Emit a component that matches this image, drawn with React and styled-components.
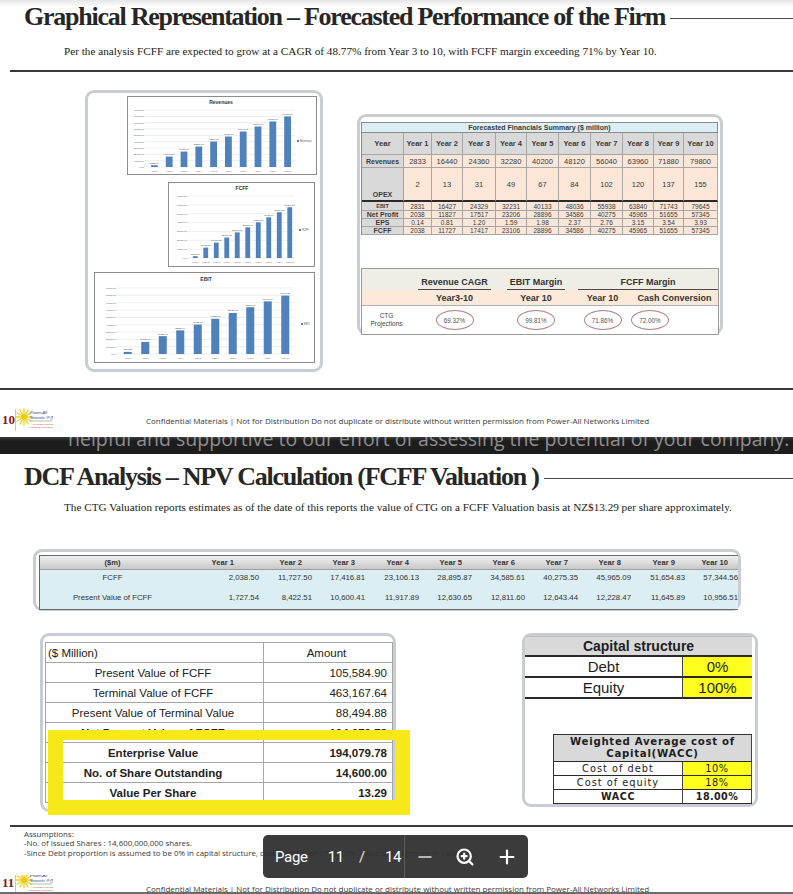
import React from 'react'
import styled, { createGlobalStyle } from 'styled-components'
import { Minus, Plus, ZoomIn } from 'lucide-react'

const sans = `"Liberation Sans", Arial, sans-serif`
const serif = `"Liberation Serif", "Times New Roman", serif`
const wide = `"DejaVu Sans", Verdana, sans-serif`

const GlobalStyle = createGlobalStyle`
  html, body { margin: 0; padding: 0; background: #ffffff; }
  body { font-family: ${sans}; color: #222; }
`

// ---------- data ----------
const revenues = [2833, 16440, 24360, 32280, 40200, 48120, 56040, 63960, 71880, 79800]
const fcff = [2038.5, 11727.5, 17416.81, 23106.13, 28895.87, 34585.61, 40275.35, 45965.09, 51654.83, 57344.56]
const ebit = [2831.21, 16427.06, 24328.91, 32230.74, 40133.21, 48035.37, 55937.96, 63840.6, 71742.81, 79645.23]
const pvFcff = ['1,727.54', '8,422.51', '10,600.41', '11,917.89', '12,630.65', '12,811.60', '12,643.44', '12,228.47', '11,645.89', '10,956.51']
const fcffText = ['2,038.50', '11,727.50', '17,416.81', '23,106.13', '28,895.87', '34,585.61', '40,275.35', '45,965.09', '51,654.83', '57,344.56']

const summaryRows = [
  { label: 'Revenues', h: 13, fs: 7.5, values: revenues },
  { label: 'OPEX', h: 34, fs: 7.5, end: true, thick: true, values: [2, 13, 31, 49, 67, 84, 102, 120, 137, 155] },
  { label: 'EBIT', h: 9, fs: 6.5, lfs: 5.5, values: [2831, 16427, 24329, 32231, 40133, 48036, 55938, 63840, 71743, 79645] },
  { label: 'Net Profit', h: 8, fs: 6.5, values: [2038, 11827, 17517, 23206, 28896, 34586, 40275, 45965, 51655, 57345] },
  { label: 'EPS', h: 8, fs: 6.5, values: ['0.14', '0.81', '1.20', '1.59', '1.98', '2.37', '2.76', '3.15', '3.54', '3.93'] },
  { label: 'FCFF', h: 8, fs: 6.5, values: [2038, 11727, 17417, 23106, 28896, 34586, 40275, 45965, 51655, 57345] },
]

const years = Array.from({ length: 10 }, (_, i) => `Year ${i + 1}`)

// ---------- page chrome ----------
const Viewer = styled.div`
  position: relative;
  width: 793px;
  height: 894px;
  overflow: hidden;
  background: #fff;
`

const Slide = styled.section`
  display: flex;
  flex-direction: column;
  padding-top: ${({ $top }) => $top}px;
  background: ${({ $shade }) => ($shade ? 'linear-gradient(#e6e6e6, #fff 7px)' : '#fff')};
`

const TitleRow = styled.div`
  display: flex;
  align-items: center;
  height: 26px;
  padding-left: 24px;
`

const Title = styled.h1`
  margin: 0;
  font-family: ${serif};
  font-weight: 700;
  font-size: 26px;
  line-height: 26px;
  letter-spacing: -1.25px;
  color: #262626;
  white-space: nowrap;
`

const TitleLine = styled.div`
  flex: 1;
  height: 1px;
  margin: 2px 0 0 5px;
  background: #4a4a4a;
`

const Lead = styled.p`
  margin: ${({ $mt }) => $mt}px 0 0 64px;
  font-family: ${serif};
  font-size: 11.2px;
  line-height: 14px;
  color: #222;
  white-space: nowrap;
`

const Rule = styled.div`
  height: 2px;
  margin: ${({ $mt }) => $mt}px 0 0 ${({ $ml = 10 }) => $ml}px;
  background: #3a3a3a;
`

const Row = styled.div`
  position: relative;
  display: flex;
  align-items: flex-start;
  margin-top: ${({ $mt }) => $mt}px;
`

const Frame = styled.div`
  box-sizing: border-box;
  flex: none;
  display: flex;
  flex-direction: column;
  align-items: flex-start;
  width: ${({ $w }) => $w}px;
  height: ${({ $h }) => $h}px;
  margin: ${({ $mt = 0 }) => $mt}px 0 0 ${({ $ml = 0 }) => $ml}px;
  border: 3px solid #c8cdd4;
  border-radius: 9px;
  background: #fff;
`

const ChartBox = styled.div`
  margin: ${({ $mt }) => $mt}px 0 0 ${({ $ml }) => $ml}px;
  line-height: 0;
`

// ---------- footer ----------
const Footer = styled.div`
  display: flex;
  align-items: center;
  height: ${({ $h }) => $h}px;
  margin-top: ${({ $mt }) => $mt}px;
  overflow: hidden;
`

const PageNum = styled.span`
  width: 13px;
  padding-left: 2px;
  font-family: ${serif};
  font-weight: 700;
  font-size: 13px;
  color: #7a1c2c;
`

const ConfText = styled.span`
  margin-left: 93px;
  margin-top: ${({ $mt = 0 }) => $mt}px;
  font-family: "Open Sans", ${sans};
  font-size: 8px;
  color: #3a3a3a;
  white-space: nowrap;
`

const Band = styled.div`
  height: 17px;
  margin-top: ${({ $mt }) => $mt}px;
  overflow: hidden;
  background: linear-gradient(#3c3c3c, #1d1d1d 4px);
`

const BandText = styled.div`
  margin: -8px 0 0 68px;
  font-family: "Open Sans", ${sans};
  font-size: 19.5px;
  line-height: 20px;
  color: #8f8f8f;
  white-space: nowrap;
`

const BottomEdge = styled.div`
  height: 3px;
  background: #6b6b6b;
`

const Logo = () => {
  const rays = Array.from({ length: 12 }, (_, i) => {
    const a = (i / 12) * Math.PI * 2
    return (
      <line
        key={i}
        x1={9 + Math.cos(a) * 2.5}
        y1={9 + Math.sin(a) * 2.5}
        x2={9 + Math.cos(a) * 8}
        y2={9 + Math.sin(a) * 8}
      />
    )
  })
  return (
    <svg width="38" height="24" viewBox="0 0 38 24" style={{ flex: 'none' }}>
      <line x1="0.5" y1="1" x2="0.5" y2="23" stroke="#caa4a8" strokeWidth="0.7" />
      <g stroke="#e9d21c" strokeWidth="1.3" strokeLinecap="round">{rays}</g>
      <circle cx="9" cy="9" r="2.6" fill="#f2c500" />
      <text x="15" y="6" fontSize="4" fontStyle="italic" fill="#2c3e8c" fontFamily={sans}>Power-All</text>
      <text x="15" y="11" fontSize="3.6" fontStyle="italic" fill="#2c3e8c" fontFamily={sans}>Networks 中国互联</text>
      <line x1="15" y1="13" x2="37" y2="13" stroke="#6aa84f" strokeWidth="0.6" />
      <text x="16" y="16.5" fontSize="2.2" fill="#c0392b" fontFamily={sans}>A Celebration of Dynamics</text>
      <text x="14" y="20" fontSize="2.2" fill="#c0392b" fontFamily={sans}>in Business, Media and Social</text>
    </svg>
  )
}

// ---------- charts ----------
const BarChart = ({ title, legend, data, max, w, h, plot }) => {
  const { left, right, top, base, tx, ty, lx, ly } = plot
  const slot = (right - left) / data.length
  const bw = slot * 0.46
  const y = (v) => base - (v / max) * (base - top)
  const ticks = []
  for (let v = 0; v <= max; v += 10000) ticks.push(v)
  return (
    <svg width={w} height={h} viewBox={`0 0 ${w} ${h}`} fontFamily={sans}>
      <rect x="0.5" y="0.5" width={w - 1} height={h - 1} fill="#fff" stroke="#8c8c8c" />
      <text x={tx} y={ty} fontSize="5" fontWeight="700" textAnchor="middle" fill="#333">{title}</text>
      {ticks.map((t) => (
        <g key={t}>
          <line x1={left - 2} x2={right} y1={y(t)} y2={y(t)} stroke="#d4d4d4" strokeWidth="0.4" />
          <text x={left - 3} y={y(t) + 0.9} fontSize="2.4" textAnchor="end" fill="#555">{t.toFixed(2)}</text>
        </g>
      ))}
      {data.map((v, i) => {
        const x = left + slot * i + (slot - bw) / 2
        return (
          <g key={i}>
            <rect x={x} y={y(v)} width={bw} height={base - y(v)} fill="#4f81bd" />
            <text x={x + bw / 2} y={y(v) - 1.6} fontSize="2.4" textAnchor="middle" fill="#444">{v.toFixed(2)}</text>
            <text x={x + bw / 2} y={base + 5} fontSize="2.4" textAnchor="middle" fill="#555">Year {i + 1}</text>
          </g>
        )
      })}
      <rect x={lx} y={ly - 2} width="2" height="2" fill="#4f81bd" />
      <text x={lx + 3} y={ly} fontSize="2.6" fill="#555">{legend}</text>
    </svg>
  )
}

// ---------- forecast summary table ----------
const SumGrid = styled.div`
  display: grid;
  grid-template-columns: 42px 28px 31px 33px 31px 32px 32px 32px 31px 30px 34px;
  margin: 5px 0 0 1px;
  border-left: 1px solid #8a8a8a;
  border-top: 1px solid #8a8a8a;
  font-family: ${sans};
  color: #3a3a3a;
`

const SumTitle = styled.div`
  grid-column: 1 / -1;
  height: 9px;
  line-height: 9px;
  text-align: center;
  font-size: 7px;
  font-weight: 700;
  background: #dbeef4;
  border-right: 1px solid #8a8a8a;
  border-bottom: 1px solid #8a8a8a;
`

const SumCell = styled.div`
  box-sizing: border-box;
  display: flex;
  justify-content: center;
  align-items: ${({ $end }) => ($end ? 'flex-end' : 'center')};
  height: ${({ $h }) => $h}px;
  padding-bottom: ${({ $end }) => ($end ? 2 : 0)}px;
  background: ${({ $bg }) => $bg};
  font-size: ${({ $fs }) => $fs}px;
  font-weight: ${({ $bold }) => ($bold ? 700 : 400)};
  white-space: nowrap;
  border-right: 1px solid #a6a6a6;
  border-bottom: ${({ $thick }) => ($thick ? '2px solid #2a2a2a' : '1px solid #a6a6a6')};
`

const MiniGrid = styled.div`
  display: grid;
  grid-template-columns: 49px 87px 76px 57px 87px;
  margin: 33px 0 0 1px;
  border: 1px solid #9a9a9a;
  font-family: ${sans};
  color: #333;
`

const MiniCell = styled.div`
  display: flex;
  justify-content: ${({ $start }) => ($start ? 'flex-start' : 'center')};
  align-items: ${({ $end }) => ($end ? 'flex-end' : 'center')};
  grid-column: span ${({ $span = 1 }) => $span};
  height: ${({ $h }) => $h}px;
  background: ${({ $bg }) => $bg};
  border-top: ${({ $line }) => ($line ? '1px solid #b0b0b0' : 'none')};
  font-size: 9px;
  font-weight: 700;
  white-space: nowrap;
`

const Underlined = styled.span`
  padding: 0 ${({ $pad = 3 }) => $pad}px 2px;
  margin-left: ${({ $ml = 0 }) => $ml}px;
  width: ${({ $w }) => ($w ? `${$w}px` : 'auto')};
  text-align: center;
  border-bottom: 1px solid #4a4a4a;
`

const Projection = styled.span`
  font-size: 6.5px;
  font-weight: 400;
  line-height: 8px;
  text-align: center;
  color: #444;
`

const Oval = styled.span`
  box-sizing: border-box;
  display: flex;
  align-items: center;
  justify-content: center;
  width: 38px;
  height: 20px;
  border: 1.5px solid #b58383;
  border-radius: 50%;
  font-size: 6.3px;
  font-weight: 400;
  color: #555;
`

// ---------- DCF table ----------
const DcfGrid = styled.div`
  display: grid;
  grid-template-columns: 145px 74px 53px 53px 54px 53px 53px 53px 53px 54px 53px;
  margin: 3px 0 0 3px;
  border: 1px solid #6a6a6a;
  border-right-width: 0;
  background: #dbeef4;
  font-family: ${sans};
  color: #333;
`

const DcfCell = styled.div`
  display: flex;
  align-items: center;
  justify-content: ${({ $align }) => $align};
  height: ${({ $h }) => $h}px;
  padding-right: ${({ $pr = 0 }) => $pr}px;
  background: ${({ $head }) => ($head ? 'linear-gradient(#efefef, #c8c8c8)' : 'transparent')};
  border-bottom: ${({ $head }) => ($head ? '1px solid #a0a0a0' : 'none')};
  font-size: ${({ $head }) => ($head ? 7.6 : 7.8)}px;
  font-weight: ${({ $head }) => ($head ? 700 : 400)};
  white-space: nowrap;
`

// ---------- NPV table ----------
const NpvGrid = styled.div`
  display: grid;
  grid-template-columns: 218px 129px;
  margin: 6px 0 0 2px;
  border-top: 1px solid #a6a6a6;
  border-left: 1px solid #a6a6a6;
  font-family: ${sans};
  color: #222;
`

const NpvCell = styled.div`
  box-sizing: border-box;
  display: flex;
  align-items: center;
  justify-content: ${({ $align }) => $align};
  height: 20px;
  padding: 0 5px 0 2px;
  border-right: 1px solid #a6a6a6;
  border-bottom: 1px solid #a6a6a6;
  font-size: 11.5px;
  font-weight: ${({ $bold }) => ($bold ? 700 : 400)};
  white-space: nowrap;
`

const Highlight = styled.div`
  position: absolute;
  left: 48px;
  top: 97px;
  box-sizing: border-box;
  width: 362px;
  height: 85px;
  border-style: solid;
  border-color: #f7e81a;
  border-width: 10px 15px 15px 15px;
  pointer-events: none;
`

// ---------- capital structure / WACC ----------
const CapGrid = styled.div`
  display: grid;
  grid-template-columns: ${({ $cols }) => $cols};
  margin: ${({ $mt = 0 }) => $mt}px 0 0 ${({ $ml = 0 }) => $ml}px;
  border-top: ${({ $box }) => ($box ? '1.5px solid #333' : '1px solid #bdbdbd')};
  border-left: ${({ $box }) => ($box ? '1.5px solid #333' : 'none')};
  color: #1e1e1e;
`

const CapCell = styled.div`
  box-sizing: border-box;
  display: flex;
  align-items: center;
  justify-content: center;
  grid-column: span ${({ $span = 1 }) => $span};
  height: ${({ $h }) => $h}px;
  background: ${({ $bg = '#fff' }) => $bg};
  border-bottom: ${({ $b = 2 }) => $b}px solid #2a2a2a;
  border-right: ${({ $br }) => ($br ? `${$br}px solid #444` : 'none')};
  font-family: ${({ $wide }) => ($wide ? wide : sans)};
  font-size: ${({ $fs }) => $fs}px;
  font-weight: ${({ $bold }) => ($bold ? 700 : 400)};
  letter-spacing: ${({ $ls = 0 }) => $ls}px;
  line-height: 1.15;
  text-align: center;
  white-space: nowrap;
`

// ---------- assumptions + pager ----------
const Notes = styled.div`
  margin: 3px 0 0 24px;
  font-family: "Open Sans", ${sans};
  font-size: 7.9px;
  line-height: 9.3px;
  color: #3a3a3a;
  white-space: nowrap;
`

const Pager = styled.div`
  position: absolute;
  left: 263px;
  top: 835px;
  display: flex;
  width: 265px;
  height: 43px;
  border-radius: 5px;
  background: rgba(48, 48, 48, 0.95);
  color: #fff;
  font-family: Roboto, ${sans};
`

const PagerCount = styled.div`
  display: flex;
  align-items: center;
  width: 141px;
  border-right: 1px solid #5e5e5e;
`

const PagerWord = styled.span`
  margin-left: ${({ $ml }) => $ml}px;
  font-size: 15px;
  letter-spacing: -0.3px;
  color: ${({ $dim }) => ($dim ? '#e6e6e6' : '#fff')};
`

const PagerTools = styled.div`
  flex: 1;
  display: flex;
  align-items: center;
  justify-content: space-around;
`

export default function App() {
  return (
    <Viewer>
      <GlobalStyle />

      <Slide $top={4} $shade>
        <TitleRow>
          <Title>Graphical Representation – Forecasted Performance of the Firm</Title>
          <TitleLine />
        </TitleRow>
        <Lead $mt={14}>
          Per the analysis FCFF are expected to grow at a CAGR of 48.77% from Year 3 to 10, with FCFF margin exceeding 71% by Year 10.
        </Lead>
        <Rule $mt={12} />

        <Row $mt={18}>
          <Frame $w={238} $h={282} $ml={85}>
            <ChartBox $ml={39} $mt={3}>
              <BarChart
                title="Revenues"
                legend="Revenues"
                data={revenues}
                max={90000}
                w={190}
                h={79}
                plot={{ left: 20, right: 168, top: 14, base: 71, tx: 94, ty: 7.5, lx: 170, ly: 46 }}
              />
            </ChartBox>
            <ChartBox $ml={80} $mt={7}>
              <BarChart
                title="FCFF"
                legend="FCFF"
                data={fcff}
                max={70000}
                w={147}
                h={85}
                plot={{ left: 22, right: 127, top: 14, base: 76, tx: 74, ty: 7.5, lx: 131, ly: 49 }}
              />
            </ChartBox>
            <ChartBox $ml={6} $mt={5}>
              <BarChart
                title="EBIT"
                legend="EBIT"
                data={ebit}
                max={90000}
                w={221}
                h={91}
                plot={{ left: 25, right: 200, top: 16, base: 82, tx: 112, ty: 8.5, lx: 207, ly: 53 }}
              />
            </ChartBox>
          </Frame>

          <Frame $w={366} $h={221} $ml={34} $mt={24}>
            <SumGrid>
              <SumTitle>Forecasted Financials Summary ($ million)</SumTitle>
              <SumCell $h={22} $bg="#d9d9d9" $fs={7.8} $bold>Year</SumCell>
              {years.map((y) => (
                <SumCell key={y} $h={22} $bg="#d9d9d9" $fs={7.5} $bold>{y}</SumCell>
              ))}
              {summaryRows.map((r) => (
                <React.Fragment key={r.label}>
                  <SumCell $h={r.h} $bg="#d9d9d9" $fs={r.lfs || 7} $bold $end={r.end} $thick={r.thick}>
                    {r.label}
                  </SumCell>
                  {r.values.map((v, i) => (
                    <SumCell key={i} $h={r.h} $bg="#fce6d8" $fs={r.fs} $thick={r.thick}>{v}</SumCell>
                  ))}
                </React.Fragment>
              ))}
            </SumGrid>

            <MiniGrid>
              <MiniCell $h={21} $bg="#eeeee6" />
              <MiniCell $h={21} $bg="#eeeee6" $end><Underlined>Revenue CAGR</Underlined></MiniCell>
              <MiniCell $h={21} $bg="#eeeee6" $end><Underlined>EBIT Margin</Underlined></MiniCell>
              <MiniCell $h={21} $bg="#eeeee6" $span={2} $end $start>
                <Underlined $ml={4} $w={136}>FCFF Margin</Underlined>
              </MiniCell>
              <MiniCell $h={15} $bg="#fde9d9" />
              <MiniCell $h={15} $bg="#fde9d9">Year3-10</MiniCell>
              <MiniCell $h={15} $bg="#fde9d9">Year 10</MiniCell>
              <MiniCell $h={15} $bg="#fde9d9">Year 10</MiniCell>
              <MiniCell $h={15} $bg="#fde9d9">Cash Conversion</MiniCell>
              <MiniCell $h={28} $bg="#fff" $line>
                <Projection>CTG<br />Projections</Projection>
              </MiniCell>
              <MiniCell $h={28} $bg="#fff" $line><Oval>69.32%</Oval></MiniCell>
              <MiniCell $h={28} $bg="#fff" $line><Oval>99.81%</Oval></MiniCell>
              <MiniCell $h={28} $bg="#fff" $line><Oval>71.86%</Oval></MiniCell>
              <MiniCell $h={28} $bg="#fff" $line $start><Oval>72.00%</Oval></MiniCell>
            </MiniGrid>
          </Frame>
        </Row>

        <Rule $mt={16} $ml={0} />

        <Footer $h={24} $mt={18}>
          <PageNum>10</PageNum>
          <Logo />
          <ConfText>
            Confidential Materials | Not for Distribution Do not duplicate or distribute without written permission from Power-All Networks Limited
          </ConfText>
        </Footer>
      </Slide>

      <Band $mt={5}>
        <BandText>helpful and supportive to our effort of assessing the potential of your company.</BandText>
      </Band>

      <Slide $top={10}>
        <TitleRow>
          <Title>DCF Analysis – NPV Calculation (FCFF Valuation )</Title>
          <TitleLine />
        </TitleRow>
        <Lead $mt={10}>
          The CTG Valuation reports estimates as of the date of this reports the value of CTG on a FCFF Valuation basis at NZ$13.29 per share approximately.
        </Lead>

        <Row $mt={35}>
          <Frame $w={708} $h={62} $ml={33}>
            <DcfGrid>
              <DcfCell $head $h={13} $align="center">($m)</DcfCell>
              {years.map((y, i) => (
                <DcfCell key={y} $head $h={13} $align="flex-end" $pr={i === 0 ? 25 : 10}>{y}</DcfCell>
              ))}
              <DcfCell $h={15} $align="center">FCFF</DcfCell>
              {fcffText.map((v) => (
                <DcfCell key={v} $h={15} $align="flex-end">{v}</DcfCell>
              ))}
              <DcfCell $h={24} $align="center">Present Value of FCFF</DcfCell>
              {pvFcff.map((v) => (
                <DcfCell key={v} $h={24} $align="flex-end">{v}</DcfCell>
              ))}
            </DcfGrid>
          </Frame>
        </Row>

        <Row $mt={22}>
          <Frame $w={356} $h={179} $ml={40}>
            <NpvGrid>
              <NpvCell $align="flex-start">($ Million)</NpvCell>
              <NpvCell $align="center">Amount</NpvCell>
              <NpvCell $align="center">Present Value of FCFF</NpvCell>
              <NpvCell $align="flex-end">105,584.90</NpvCell>
              <NpvCell $align="center">Terminal Value of FCFF</NpvCell>
              <NpvCell $align="flex-end">463,167.64</NpvCell>
              <NpvCell $align="center">Present Value of Terminal Value</NpvCell>
              <NpvCell $align="flex-end">88,494.88</NpvCell>
              <NpvCell $align="center" $bold>Net Present Value of FCFF</NpvCell>
              <NpvCell $align="flex-end" $bold>194,079.78</NpvCell>
              <NpvCell $align="center" $bold>Enterprise Value</NpvCell>
              <NpvCell $align="flex-end" $bold>194,079.78</NpvCell>
              <NpvCell $align="center" $bold>No. of Share Outstanding</NpvCell>
              <NpvCell $align="flex-end" $bold>14,600.00</NpvCell>
              <NpvCell $align="center" $bold>Value Per Share</NpvCell>
              <NpvCell $align="flex-end" $bold>13.29</NpvCell>
            </NpvGrid>
          </Frame>

          <Frame $w={236} $h={174} $ml={126}>
            <CapGrid $cols="158px 69px">
              <CapCell $span={2} $h={20} $bg="#d9d9d9" $fs={14} $bold>Capital structure</CapCell>
              <CapCell $h={21} $fs={15} $br={1}>Debt</CapCell>
              <CapCell $h={21} $fs={15} $bg="#ffff1e">0%</CapCell>
              <CapCell $h={21} $fs={15} $br={1}>Equity</CapCell>
              <CapCell $h={21} $fs={15} $bg="#ffff1e">100%</CapCell>
            </CapGrid>

            <CapGrid $cols="129px 69px" $mt={35} $ml={28} $box>
              <CapCell $span={2} $h={27} $bg="#d9d9d9" $fs={10.2} $ls={0.7} $bold $wide $b={1.5} $br={1.5}>
                Weighted Average cost of<br />Capital(WACC)
              </CapCell>
              <CapCell $h={14} $fs={9.8} $ls={1} $wide $b={1} $br={1}>Cost of debt</CapCell>
              <CapCell $h={14} $fs={9.8} $ls={0.6} $wide $b={1} $br={1.5} $bg="#ffff1e">10%</CapCell>
              <CapCell $h={14} $fs={9.8} $ls={1} $wide $b={1} $br={1}>Cost of equity</CapCell>
              <CapCell $h={14} $fs={9.8} $ls={0.6} $wide $b={1} $br={1.5} $bg="#ffff1e">18%</CapCell>
              <CapCell $h={14} $fs={9.6} $ls={0.6} $wide $bold $b={1.5} $br={1}>WACC</CapCell>
              <CapCell $h={14} $fs={9.6} $ls={0.4} $wide $bold $b={1.5} $br={1.5}>18.00%</CapCell>
            </CapGrid>
          </Frame>

          <Highlight />
        </Row>

        <Rule $mt={13} />

        <Notes>
          Assumptions:
          <br />
          -No. of issued Shares : 14,600,000,000 shares.
          <br />
          -Since Debt proportion is assumed to be 0% in capital structure, cost of Debt, which is 10% , have been ignored in valuation.
        </Notes>

        <Footer $h={17} $mt={17}>
          <PageNum>11</PageNum>
          <Logo />
          <ConfText $mt={10}>
            Confidential Materials | Not for Distribution Do not duplicate or distribute without written permission from Power-All Networks Limited
          </ConfText>
        </Footer>
        <BottomEdge />
      </Slide>

      <Pager>
        <PagerCount>
          <PagerWord $ml={12}>Page</PagerWord>
          <PagerWord $ml={20}>11</PagerWord>
          <PagerWord $ml={15} $dim>/</PagerWord>
          <PagerWord $ml={20}>14</PagerWord>
        </PagerCount>
        <PagerTools>
          <Minus size={20} strokeWidth={2.4} color="#b5b5b5" />
          <ZoomIn size={20} strokeWidth={2.6} color="#fff" />
          <Plus size={22} strokeWidth={2.4} color="#fff" />
        </PagerTools>
      </Pager>
    </Viewer>
  )
}
